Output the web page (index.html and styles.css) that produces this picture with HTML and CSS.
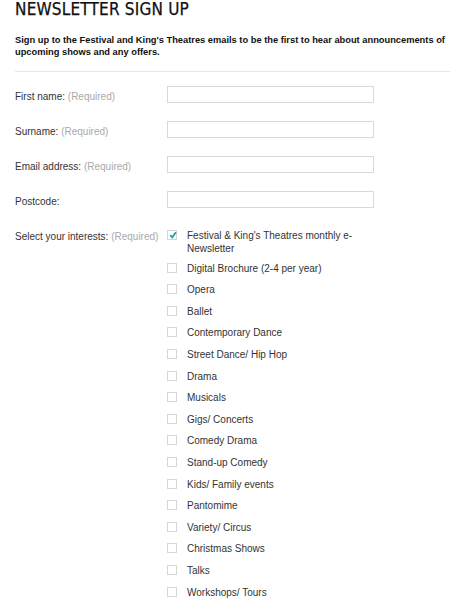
FILE: index.html
```html
<!DOCTYPE html>
<html>
<head>
<meta charset="utf-8">
<link rel="stylesheet" href="styles.css">
</head>
<body>
<div class="page">
  <h1 class="title">NEWSLETTER SIGN UP</h1>
  <p class="intro">Sign up to the Festival and King's Theatres emails to be the first to hear about announcements of upcoming shows and any offers.</p>
  <hr class="rule">
  <form class="form">
    <div class="row">
      <label class="label">First name: <span class="req">(Required)</span></label>
      <input class="field" type="text">
    </div>
    <div class="row">
      <label class="label">Surname: <span class="req">(Required)</span></label>
      <input class="field" type="text">
    </div>
    <div class="row">
      <label class="label">Email address: <span class="req">(Required)</span></label>
      <input class="field" type="text">
    </div>
    <div class="row">
      <label class="label">Postcode:</label>
      <input class="field" type="text">
    </div>
    <div class="row interests">
      <div class="label">Select your interests: <span class="req">(Required)</span></div>
      <ul class="options">
        <li class="opt first"><span class="box checked"><svg viewBox="0 0 10 10" width="10" height="10"><path d="M2.2 5.2 L4.2 7.4 L8 2.2" fill="none" stroke="#1ba59c" stroke-width="1.8"/></svg></span><span class="txt">Festival &amp; King's Theatres monthly e-Newsletter</span></li>
        <li class="opt"><span class="box"></span><span class="txt">Digital Brochure (2-4 per year)</span></li>
        <li class="opt"><span class="box"></span><span class="txt">Opera</span></li>
        <li class="opt"><span class="box"></span><span class="txt">Ballet</span></li>
        <li class="opt"><span class="box"></span><span class="txt">Contemporary Dance</span></li>
        <li class="opt"><span class="box"></span><span class="txt">Street Dance/ Hip Hop</span></li>
        <li class="opt"><span class="box"></span><span class="txt">Drama</span></li>
        <li class="opt"><span class="box"></span><span class="txt">Musicals</span></li>
        <li class="opt"><span class="box"></span><span class="txt">Gigs/ Concerts</span></li>
        <li class="opt"><span class="box"></span><span class="txt">Comedy Drama</span></li>
        <li class="opt"><span class="box"></span><span class="txt">Stand-up Comedy</span></li>
        <li class="opt"><span class="box"></span><span class="txt">Kids/ Family events</span></li>
        <li class="opt"><span class="box"></span><span class="txt">Pantomime</span></li>
        <li class="opt"><span class="box"></span><span class="txt">Variety/ Circus</span></li>
        <li class="opt"><span class="box"></span><span class="txt">Christmas Shows</span></li>
        <li class="opt"><span class="box"></span><span class="txt">Talks</span></li>
        <li class="opt"><span class="box"></span><span class="txt">Workshops/ Tours</span></li>
      </ul>
    </div>
  </form>
</div>
</body>
</html>
```
FILE: styles.css
```css
html, body {
  margin: 0;
  padding: 0;
  background: #fff;
}
.page {
  padding: 0 14px 0 15px;
  font-family: "Liberation Sans", Arial, sans-serif;
  color: #333;
  font-size: 10px;
}
.title {
  margin: 0;
  font-family: "DejaVu Sans Condensed", "DejaVu Sans", sans-serif;
  font-weight: normal;
  font-size: 17px;
  line-height: 18px;
  color: #111;
  letter-spacing: 0.2px;
  -webkit-text-stroke: 0.25px #111;
}
.intro {
  margin: 16px 0 0;
  font-weight: bold;
  font-size: 9.3px;
  line-height: 12px;
  color: #111;
}
.rule {
  margin: 13px 0 0;
  border: 0;
  border-top: 1px solid #e6e6e6;
  height: 0;
}
.form {
  margin-top: 14px;
}
.row {
  display: grid;
  grid-template-columns: 152px 207px;
  align-items: center;
  margin-bottom: 18px;
}
.label {
  font-size: 10px;
  color: #333;
  padding-top: 3px;
}
.req {
  color: #aaa;
}
.field {
  box-sizing: border-box;
  width: 207px;
  height: 17px;
  margin: 0;
  border: 1px solid #d9d9d9;
  background: #fff;
  padding: 0 3px;
}
.interests {
  align-items: start;
  grid-template-columns: 152px 260px;
  margin-top: 21px;
}
.interests .label {
  line-height: 13px;
  padding-top: 1px;
}
.options {
  list-style: none;
  margin: 0;
  padding: 0;
  display: flex;
  flex-direction: column;
  gap: 8.6px;
}
.opt {
  display: flex;
  align-items: flex-start;
}
.opt.first {
  margin-bottom: -2px;
}
.box {
  box-sizing: border-box;
  width: 10px;
  height: 10px;
  border: 1px solid #d6d6d6;
  background: #fff;
  margin-top: 1px;
  flex: none;
  position: relative;
}
.box.checked svg {
  position: absolute;
  left: 0;
  top: -1px;
}
.txt {
  margin-left: 10px;
  width: 190px;
  line-height: 13px;
  color: #333;
}
```
